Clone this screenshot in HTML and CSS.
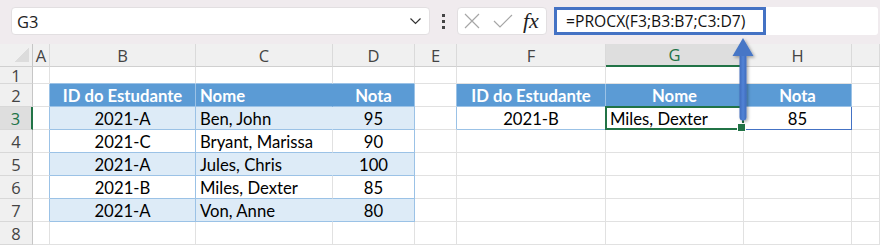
FILE: index.html
```html
<!doctype html>
<html lang="pt">
  <head>
    <meta charset="UTF-8" />
    <title>PROCX</title>
    <link rel="stylesheet" href="styles.css">
  </head>
  <body>
    <div class="app">
      <div class="toolbar">
        <div class="namebox">
          <span>G3</span>
          <svg class="chevron" width="12" height="8" viewBox="0 0 12 8">
            <path d="M1 1.5 L6 6.5 L11 1.5" fill="none" stroke="#333" stroke-width="1.2" />
          </svg>
        </div>
        <div class="dots"><i></i><i></i><i></i></div>
        <div class="fx-box">
          <svg width="18" height="16" viewBox="0 0 18 16">
            <path d="M2 1 L16 15 M16 1 L2 15" stroke="#a6a6a6" stroke-width="1.2" />
          </svg>
          <svg width="20" height="14" viewBox="0 0 20 14">
            <path d="M1 7 L7 13 L19 1" fill="none" stroke="#a6a6a6" stroke-width="1.2" />
          </svg>
          <span class="fx">fx</span>
        </div>
        <div class="formula">
          <span class="formula-text">=PROCX(F3;B3:B7;C3:D7)</span>
        </div>
      </div>

      <div class="sheet">
        <div class="row head">
          <div class="corner"></div>
          <div>A</div><div>B</div><div>C</div><div>D</div><div>E</div>
          <div>F</div><div class="active">G</div><div>H</div><div></div>
        </div>

        <div class="row short">
          <div class="rh">1</div>
          <div></div><div class="bb"></div><div class="bb"></div><div class="bb"></div><div></div>
          <div></div><div></div><div></div><div></div>
        </div>

        <div class="row">
          <div class="rh">2</div>
          <div class="br"></div>
          <div class="hd c bb br">ID do Estudante</div>
          <div class="hd bb nr">Nome</div>
          <div class="hd c bb br">Nota</div>
          <div class="br"></div>
          <div class="hd c bb br">ID do Estudante</div>
          <div class="hd c bb br">Nome</div>
          <div class="hd c bb br">Nota</div>
          <div></div>
        </div>

        <div class="row">
          <div class="rh active">3</div>
          <div class="br"></div>
          <div class="band c bb br">2021-A</div>
          <div class="band bb nr">Ben, John</div>
          <div class="band c bb br">95</div>
          <div class="br"></div>
          <div class="c bb">2021-B</div>
          <div class="sel">Miles, Dexter</div>
          <div class="c dk">85</div>
          <div></div>
        </div>

        <div class="row">
          <div class="rh">4</div>
          <div class="br"></div>
          <div class="c bb br">2021-C</div>
          <div class="bb">Bryant, Marissa</div>
          <div class="c bb br">90</div>
          <div></div>
          <div></div><div></div><div></div><div></div>
        </div>

        <div class="row">
          <div class="rh">5</div>
          <div class="br"></div>
          <div class="band c bb br">2021-A</div>
          <div class="band bb nr">Jules, Chris</div>
          <div class="band c bb br">100</div>
          <div></div>
          <div></div><div></div><div></div><div></div>
        </div>

        <div class="row">
          <div class="rh">6</div>
          <div class="br"></div>
          <div class="c bb br">2021-B</div>
          <div class="bb">Miles, Dexter</div>
          <div class="c bb br">85</div>
          <div></div>
          <div></div><div></div><div></div><div></div>
        </div>

        <div class="row">
          <div class="rh">7</div>
          <div class="br"></div>
          <div class="band c bb br">2021-A</div>
          <div class="band bb nr">Von, Anne</div>
          <div class="band c bb br">80</div>
          <div></div>
          <div></div><div></div><div></div><div></div>
        </div>

        <div class="row">
          <div class="rh">8</div>
          <div></div><div></div><div></div><div></div><div></div>
          <div></div><div></div><div></div><div></div>
        </div>
      </div>

      <!-- annotation arrow pointing at the formula -->
      <svg class="arrow" width="32" height="92" viewBox="0 0 32 92">
        <defs>
          <linearGradient id="shaft" x1="0" x2="1" y1="0" y2="0">
            <stop offset="0" stop-color="#3f6cbd" />
            <stop offset="0.5" stop-color="#5283d6" />
            <stop offset="1" stop-color="#3f6cbd" />
          </linearGradient>
          <filter id="shadow" x="-50%" y="-20%" width="200%" height="140%">
            <feDropShadow dx="1.5" dy="1.5" stdDeviation="1.5" flood-color="#000" flood-opacity="0.35" />
          </filter>
        </defs>
        <g filter="url(#shadow)">
          <path d="M11.5 21 H18.5 V83 a3.5 3.5 0 0 1 -7 0 Z" fill="url(#shaft)" />
          <path d="M15 4 L25.5 22 H4.5 Z" fill="#4676c6" />
        </g>
      </svg>
    </div>
  </body>
</html>
```

FILE: styles.css
```css
* {
  margin: 0;
  padding: 0;
  box-sizing: border-box;
}

body {
  background: #fff;
  font-family: "Open Sans", "Noto Sans", sans-serif;
}

.app {
  position: relative;
  width: 880px;
  height: 245px;
  overflow: hidden;
}

/* formula bar */
.toolbar {
  height: 44px;
  background: #f0ebee;
  display: flex;
  align-items: flex-start;
  padding: 7px 2px 0 11px;
}

.namebox {
  width: 419px;
  height: 28px;
  background: #fff;
  border: 1px solid #e2dfe1;
  border-radius: 4px;
  display: flex;
  align-items: center;
  justify-content: space-between;
  padding: 0 7px 0 5px;
  font-size: 16.5px;
  color: #222;
}

.chevron {
  width: 13px;
}

.dots {
  width: 27px;
  height: 28px;
  display: flex;
  flex-direction: column;
  align-items: center;
  justify-content: center;
  gap: 3px;
}

.dots i {
  width: 3px;
  height: 3px;
  background: #444;
}

.fx-box {
  width: 90px;
  height: 28px;
  background: #fff;
  border: 1px solid #e2dfe1;
  border-radius: 4px;
  display: flex;
  align-items: center;
  padding-left: 5px;
  gap: 12px;
}

.fx {
  font-family: "Liberation Serif", serif;
  font-style: italic;
  font-size: 22px;
  color: #222;
  line-height: 1;
  margin-left: -2px;
}

.formula {
  flex: 1;
  height: 28px;
  margin-left: 7px;
  background: #fff;
  border-radius: 3px;
  display: flex;
}

.formula-text {
  width: 212px;
  height: 28px;
  border: 3px solid #4472c4;
  padding-left: 9px;
  font-size: 15.7px;
  line-height: 22px;
  color: #111;
}

/* grid */
.row {
  display: grid;
  grid-template-columns: 33px 17px 146px 137px 82px 42px 149px 138px 108px 28px;
  height: 23px;
  font-family: "Lato", sans-serif;
  font-size: 16.7px;
  color: #000;
}

.row.short {
  height: 17px;
}

.row > div {
  border-right: 1px solid #e1e1e1;
  border-bottom: 1px solid #e1e1e1;
  display: flex;
  align-items: center;
  padding: 2px 4px 0;
  line-height: 1;
  white-space: nowrap;
}

.head > div {
  background: #f0f0f0;
  justify-content: center;
  font-family: "Open Sans", sans-serif;
  font-size: 16.5px;
  color: #444;
  border-right-color: #dadada;
  border-bottom-color: #d0d0d0;
}

.head > .corner {
  background: #f0f0f0 linear-gradient(to bottom right, transparent 50%, #dcdcdc 50%) no-repeat right 3px bottom 4px / 15px 15px;
  border-right-color: #c6c6c6;
}

.head > .active {
  background: #dedede;
  color: #217346;
  border-bottom: 2px solid #217346;
}

.row > .rh {
  background: #f0f0f0;
  justify-content: center;
  padding: 1px 0 0;
  font-family: "Open Sans", sans-serif;
  font-size: 16.5px;
  line-height: 14px;
  color: #444;
  border-right-color: #c6c6c6;
  border-bottom-color: #d8d8d8;
}

.row > .rh.active {
  background: #dedede;
  color: #217346;
  border-right: 2px solid #217346;
}

.row > .c {
  justify-content: center;
}

.row > .hd {
  background: #5b9bd5;
  color: #fff;
  font-weight: 700;
}

.row > .band {
  background: #ddebf7;
}

.row > .bb {
  border-bottom-color: #9bc2e6;
}

.row > .br {
  border-right-color: #9bc2e6;
}

.row > .nr {
  border-right-color: transparent;
}

.row > .dk {
  border-right-color: #4472c4;
  border-bottom-color: #4472c4;
}

/* active cell G3 */
.row > .sel {
  position: relative;
}

.sel::before {
  content: "";
  position: absolute;
  inset: -1px;
  border: 2px solid #217346;
}

.sel::after {
  content: "";
  position: absolute;
  right: -3px;
  bottom: -3px;
  width: 7px;
  height: 7px;
  background: #217346;
  border: 1px solid #fff;
}

.arrow {
  position: absolute;
  left: 728px;
  top: 34px;
  z-index: 2;
}
```
